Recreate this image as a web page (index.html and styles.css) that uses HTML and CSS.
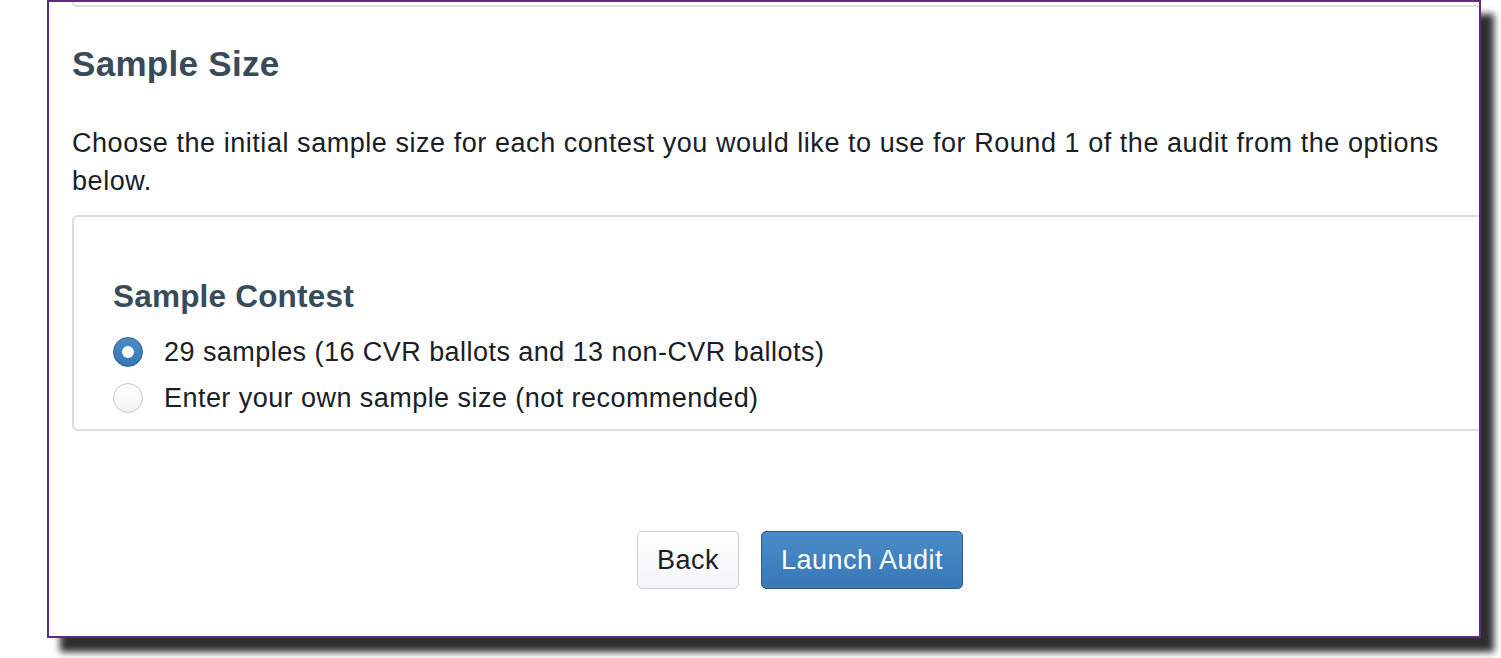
FILE: index.html
```html
<!DOCTYPE html>
<html>
<head>
<meta charset="utf-8">
<link rel="stylesheet" href="styles.css">
</head>
<body>
<div class="frame">
  <div class="content">
    <div class="prev-card"></div>
    <h2 class="title">Sample Size</h2>
    <p class="desc">Choose the initial sample size for each contest you would like to use for Round 1 of the audit from the options below.</p>
    <div class="card">
      <h3 class="card-title">Sample Contest</h3>
      <label class="radio"><span class="radio-ind checked"></span><span>29 samples (16 CVR ballots and 13 non-CVR ballots)</span></label>
      <label class="radio"><span class="radio-ind"></span><span>Enter your own sample size (not recommended)</span></label>
    </div>
    <div class="actions">
      <button class="btn">Back</button>
      <button class="btn primary">Launch Audit</button>
    </div>
  </div>
</div>
</body>
</html>
```

FILE: styles.css
```css
html, body { margin: 0; background: #fff; }
body { font-family: "Liberation Sans", Arial, sans-serif; color: #182026; min-height: 658px; }
.frame {
  margin-left: 47px;
  width: 1430px;
  height: 634px;
  border: 2px solid #5a2b8d;
  overflow: hidden;
  background: #fff;
  box-shadow: 13px 14px 7px rgba(0,0,0,0.82);
}
.content { margin-left: 23px; width: 1456px; }
.prev-card {
  height: 3px;
  border: 2px solid #dddddd;
  border-top: none;
  border-radius: 0 0 6px 6px;
}
.title {
  margin: 36px 0 0;
  font-size: 35px;
  letter-spacing: 0.3px;
  line-height: 42px;
  font-weight: 700;
  color: #394b59;
}
.desc {
  margin: 39px 30px 0 0;
  font-size: 27px;
  letter-spacing: 0.55px;
  line-height: 38px;
  color: #182026;
}
.card {
  margin-top: 15px;
  border: 2px solid #dddddd;
  border-radius: 6px;
  padding: 61px 40px 8px 39px;
}
.card-title {
  margin: 0 0 15px;
  font-size: 31.5px;
  letter-spacing: 0.2px;
  line-height: 36px;
  font-weight: 700;
  color: #394b59;
}
.radio {
  display: flex;
  align-items: center;
  height: 46px;
  font-size: 27px;
  letter-spacing: 0.45px;
  color: #182026;
}
.radio-ind {
  width: 28px;
  height: 28px;
  border-radius: 50%;
  margin-right: 21px;
  flex: none;
  background: linear-gradient(#ffffff, #f1f3f5);
  border: 1.5px solid #c4c8cc;
  position: relative;
}
.radio-ind.checked {
  background: linear-gradient(#4a8bc8, #3677b6);
  border-color: #2b5f93;
}
.radio-ind.checked::after {
  content: "";
  position: absolute;
  left: 50%; top: 50%;
  width: 12px; height: 12px;
  margin: -6px 0 0 -6px;
  border-radius: 50%;
  background: #fff;
}
.actions {
  display: flex;
  justify-content: center;
  gap: 22px;
  margin-top: 100px;
}
.btn {
  height: 58px;
  padding: 0 19px;
  font-family: "Liberation Sans", Arial, sans-serif;
  font-size: 27px;
  letter-spacing: 0.5px;
  color: #182026;
  border-radius: 5px;
  border: 1.5px solid #cfd2d5;
  background: linear-gradient(#ffffff, #f3f5f7);
}
.btn.primary {
  color: #fff;
  border-color: #2b5c8c;
  background: linear-gradient(#4a8bc8, #3878b6);
}
```
